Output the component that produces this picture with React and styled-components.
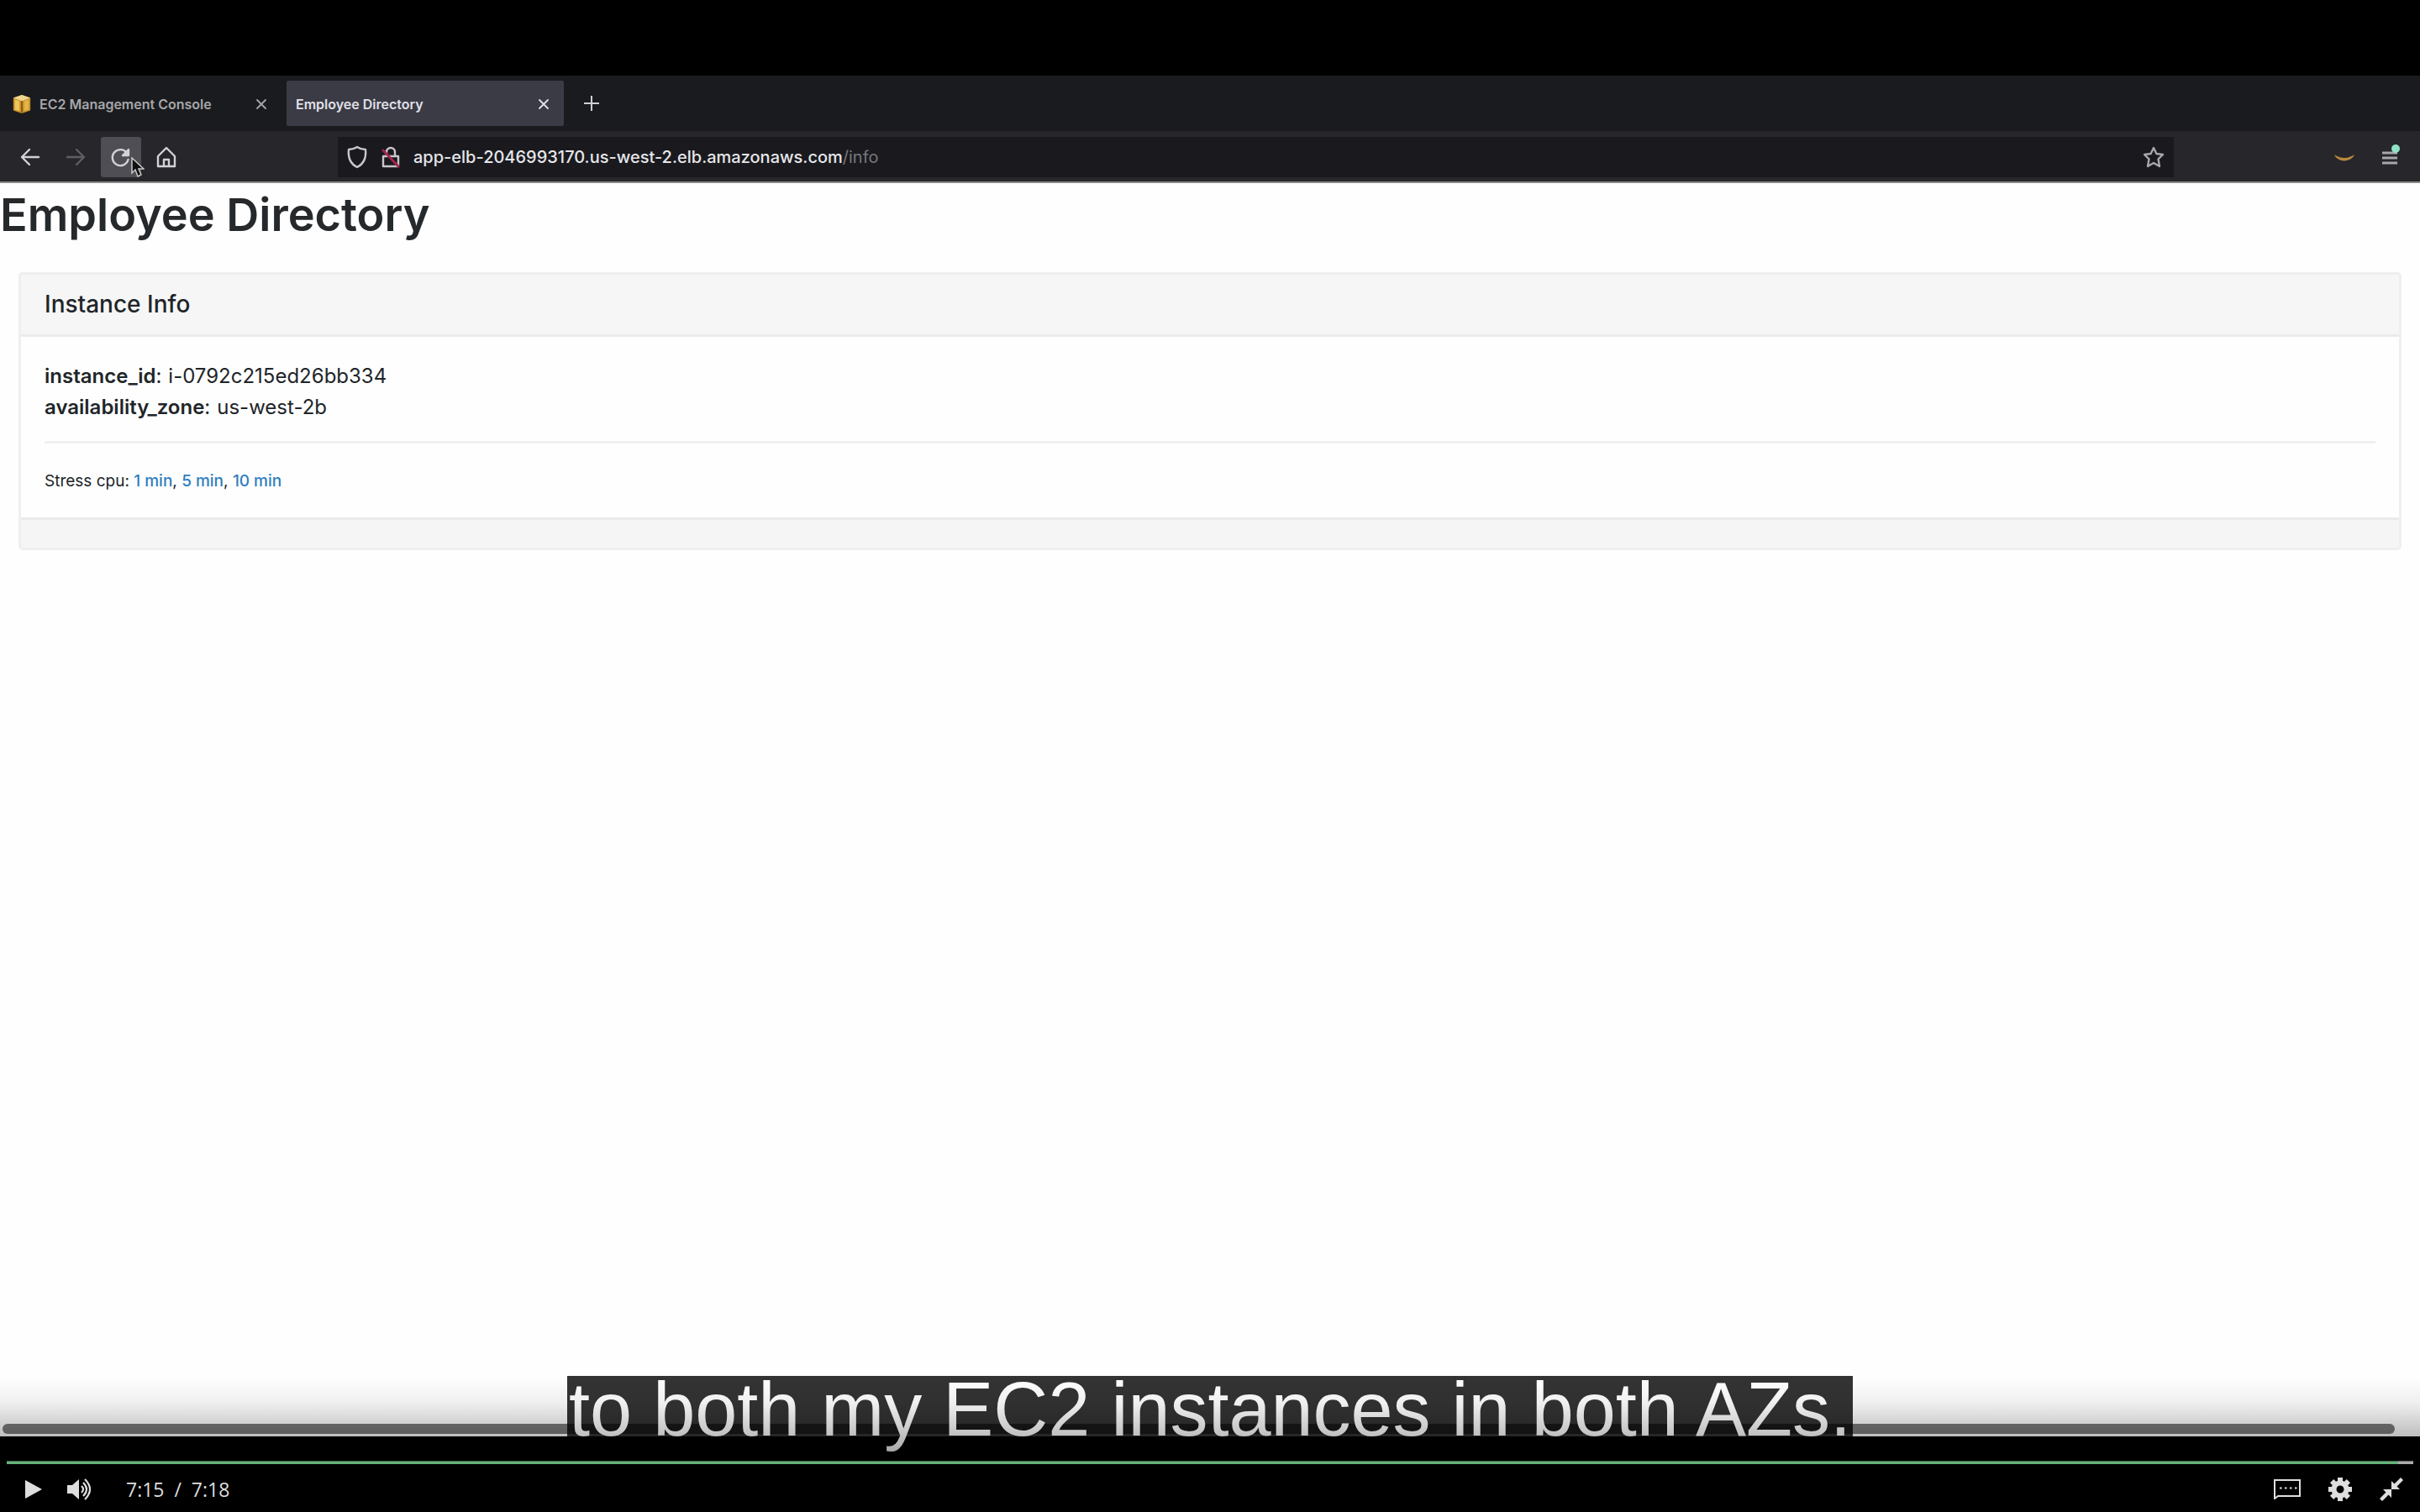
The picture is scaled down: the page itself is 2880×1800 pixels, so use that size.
import React from "react";
import styled, { createGlobalStyle } from "styled-components";

const ui = `Inter, "Liberation Sans", sans-serif`;

const Global = createGlobalStyle`
  *, *::before, *::after { box-sizing: border-box; }
  html, body, #root { height: 100%; }
  body { margin: 0; background: #000; font-family: ${ui}; overflow: hidden; }
  button { font: inherit; color: inherit; background: none; border: 0; padding: 0; margin: 0; display: flex; align-items: center; justify-content: center; }
  svg { display: block; flex-shrink: 0; }
`;

const Player = styled.div`
  display: flex;
  flex-direction: column;
  height: 100vh;
  background: #000;
`;

const Frame = styled.main`
  position: relative;
  flex: 1;
  min-height: 0;
  margin-top: 90px;
  display: flex;
  flex-direction: column;
  background: #fefefe;
`;

const TabStrip = styled.div`
  display: flex;
  align-items: center;
  height: 66px;
  background: #1a1b1e;
`;

const Tab = styled.div`
  display: flex;
  align-items: center;
  width: ${(p) => (p.$active ? 330 : 341)}px;
  height: 54px;
  padding: 2px ${(p) => (p.$active ? 14 : 20)}px 0 ${(p) => (p.$active ? 11 : 14)}px;
  border-radius: 2px;
  background: ${(p) => (p.$active ? "#3a3b45" : "transparent")};
  color: ${(p) => (p.$active ? "#e0e0e8" : "#a6a6aa")};
  font-size: 16px;
  font-weight: 600;
`;

const TabButton = styled.button`
  && {
    flex: 1;
    justify-content: flex-start;
    gap: 9px;
    white-space: nowrap;
  }
`;

const SmallButton = styled.button`
  width: 20px;
  height: 28px;
`;

const NewTab = styled.button`
  width: 66px;
  height: 54px;
`;

const Toolbar = styled.div`
  display: flex;
  align-items: center;
  height: 62px;
  padding: 2px 12px 0;
  background: #26262b;
  border-bottom: 2px solid #8a8a8a;
`;

const NavButtons = styled.div`
  display: flex;
  align-items: center;
  gap: 6px;
  width: 390px;
`;

const ToolButton = styled.button`
  && {
    width: 48px;
    height: 48px;
    border-radius: 3px;
    color: #d2d2d6;
    background: ${(p) => (p.$hover ? "#4e4e54" : "transparent")};
  }
`;

const AddressBar = styled.div`
  flex: 1;
  display: flex;
  align-items: center;
  height: 48px;
  padding: 0 14px 0 10px;
  gap: 14px;
  background: #1a1a1e;
`;

const Address = styled.div`
  flex: 1;
  font-size: 20px;
  font-weight: 500;
  color: #e6e6ea;
  span { font-weight: 400; color: #77777d; }
`;

const Extras = styled.div`
  width: 281px;
  display: flex;
  justify-content: flex-end;
  align-items: center;
  gap: 6px;
`;

const Page = styled.section`
  flex: 1;
  color: #212529;
`;

const Title = styled.h1`
  margin: 0;
  padding: 2px 0 32px;
  font-size: 54px;
  line-height: 72px;
  font-weight: 600;
  color: #26292b;
`;

const Card = styled.article`
  margin: 0 22px;
  border: 3px solid #efefef;
  border-radius: 5px;
`;

const CardHeader = styled.h2`
  margin: 0;
  padding: 19px 28px;
  border-bottom: 3px solid #ebebeb;
  background: #f6f6f6;
  font-size: 28px;
  line-height: 33px;
  font-weight: 500;
`;

const CardBody = styled.div`
  padding: 28px;
`;

const Details = styled.dl`
  margin: 0;
  font-size: 24px;
  line-height: 37px;
  div { display: flex; gap: 8px; }
  dt::after { content: ":"; font-weight: 400; }
  dt { font-weight: 600; }
  dd { margin: 0; }
`;

const Rule = styled.hr`
  margin: 22px 0 30px;
  border: 0;
  border-top: 3px solid #f0f0f0;
`;

const Stress = styled.p`
  margin: 0;
  font-size: 19px;
  line-height: 30px;
  a { color: #2f7dc0; font-weight: 500; text-decoration: none; }
`;

const CardFooter = styled.footer`
  height: 36px;
  border-top: 3px solid #ebebeb;
  background: #f5f5f5;
`;

const ScrollThumb = styled.div`
  height: 12px;
  margin: 0 30px 3px 3px;
  border-radius: 6px;
  background: #7a7a7a;
`;

const Caption = styled.div`
  position: absolute;
  left: 0;
  right: 0;
  top: calc(100% - 72px);
  display: flex;
  justify-content: center;
  pointer-events: none;
`;

const CaptionText = styled.span`
  padding: 0 2px;
  background: linear-gradient(rgba(0, 0, 0, 0.8) 72px, transparent 72px);
  color: #fff;
  font-family: "Liberation Sans", Arial, sans-serif;
  font-size: 90px;
  line-height: 80px;
  white-space: nowrap;
`;

const Shade = styled.div`
  position: absolute;
  left: 0;
  right: 0;
  bottom: -30px;
  height: 100px;
  background: linear-gradient(rgba(0, 0, 0, 0), rgba(0, 0, 0, 0.06) 30%, rgba(0, 0, 0, 0.25) 70%, rgba(0, 0, 0, 0.4));
  pointer-events: none;
`;

const Pointer = styled.svg`
  position: absolute;
  left: 156px;
  top: 97px;
`;

const Controls = styled.footer`
  height: 90px;
  padding: 29px 8px 0;
`;

const Seek = styled.input`
  display: block;
  appearance: none;
  width: 100%;
  height: 4px;
  margin: 0;
  background: linear-gradient(to right, #66b27b 99.37%, #aaa 99.37%);
  &::-webkit-slider-thumb { appearance: none; width: 0; height: 0; }
`;

const ControlRow = styled.div`
  display: flex;
  align-items: center;
  height: 57px;
  padding: 2px 0 0 8px;
  color: #dedede;
`;

const ControlButton = styled.button`
  && {
    width: ${(p) => p.$width}px;
    height: 48px;
  }
`;

const Time = styled.div`
  flex: 1;
  margin-left: 24px;
  font-family: "Open Sans", sans-serif;
  font-size: 23px;
  line-height: 30px;
  white-space: pre;
`;

const stroke = { fill: "none", stroke: "currentColor", strokeWidth: 2.4, strokeLinecap: "round", strokeLinejoin: "round" };

const Cross = () => (
  <svg width="14" height="14" viewBox="0 0 14 14" {...stroke} strokeWidth="1.8"><path d="M2 2l10 10M12 2L2 12" /></svg>
);

const AwsCube = () => (
  <svg width="24" height="24" viewBox="0 0 24 26">
    <path d="M12 1L23 5v16l-11 4L1 21V5z" fill="#c98f2c" />
    <path d="M12 1l11 4-11 4L1 5z" fill="#f0d68c" />
    <path d="M3 7l6 2v13l-6-2z" fill="#ecc658" />
    <path d="M21 7l-6 2v13l6-2z" fill="#e2b548" />
    <path d="M12 9v16" stroke="#8a5a14" strokeWidth="2" />
  </svg>
);

export default function App() {
  return (
    <>
      <Global />
      <Player>
        <Frame>
          <TabStrip>
            <Tab>
              <TabButton><AwsCube />EC2 Management Console</TabButton>
              <SmallButton aria-label="Close EC2 Management Console"><Cross /></SmallButton>
            </Tab>
            <Tab $active>
              <TabButton>Employee Directory</TabButton>
              <SmallButton aria-label="Close Employee Directory"><Cross /></SmallButton>
            </Tab>
            <NewTab aria-label="New tab">
              <svg width="20" height="20" viewBox="0 0 20 20" fill="none" stroke="#d0d0d4" strokeWidth="2"><path d="M10 1v18M1 10h18" /></svg>
            </NewTab>
          </TabStrip>

          <Toolbar>
            <NavButtons>
              <ToolButton aria-label="Back">
                <svg width="24" height="24" viewBox="0 0 24 24" {...stroke}><path d="M22 12H2M11 3l-9 9 9 9" /></svg>
              </ToolButton>
              <ToolButton aria-label="Forward">
                <svg width="24" height="24" viewBox="0 0 24 24" {...stroke} stroke="#5e5e63"><path d="M2 12h20M13 3l9 9-9 9" /></svg>
              </ToolButton>
              <ToolButton $hover aria-label="Reload">
                <svg width="26" height="26" viewBox="0 0 26 26" {...stroke}><path d="M20 8a9.500 9.500 0 1 0 1.500 8" /><path d="M22 4v7h-7z" fill="currentColor" /></svg>
              </ToolButton>
              <ToolButton aria-label="Home">
                <svg width="26" height="26" viewBox="0 0 26 26" {...stroke}><path d="M3 12L13 2l10 10v12H3zM10 24v-8h6v8" /></svg>
              </ToolButton>
            </NavButtons>
            <AddressBar>
              <svg width="26" height="28" viewBox="0 0 26 28" {...stroke} stroke="#c8c8cc"><path d="M13 2c3 2 6 3 10 3 1 10-2 17-10 21C5 22 2 15 3 5c4 0 7-1 10-3z" /></svg>
              <svg width="26" height="28" viewBox="0 0 26 28" {...stroke} stroke="#c8c8cc">
                <path d="M8 13V8a5 5 0 0 1 10 0v5M4 13h18v12H4z" /><path d="M4 6l18 19" stroke="#a8244c" strokeWidth="3" />
              </svg>
              <Address>app-elb-2046993170.us-west-2.elb.amazonaws.com<span>/info</span></Address>
              <SmallButton aria-label="Bookmark this page">
                <svg width="28" height="28" viewBox="0 0 28 28" {...stroke} stroke="#a8a8ac"><path d="M14 3l3.400 7 7.600 1-5.500 5.300L21 25l-7-4-7 4 1.500-8.700L3 11l7.600-1z" /></svg>
              </SmallButton>
            </AddressBar>
            <Extras>
              <ToolButton aria-label="Amazon extension">
                <svg width="26" height="16" viewBox="0 0 26 16" fill="#b9883c"><path d="M1 5q12 8 24 0q-1 3-4 5-8 5-16 0-3-2-4-5z" /></svg>
              </ToolButton>
              <ToolButton aria-label="Application menu">
                <svg width="26" height="34" viewBox="0 0 26 34"><path d="M4 12h18M4 18h18M4 24h18" stroke="#a8a8ac" strokeWidth="3" /><circle cx="20" cy="7" r="5" fill="#8fe3c4" /></svg>
              </ToolButton>
            </Extras>
          </Toolbar>

          <Page>
            <Title>Employee Directory</Title>
            <Card>
              <CardHeader>Instance Info</CardHeader>
              <CardBody>
                <Details>
                  <div><dt>instance_id</dt><dd>i-0792c215ed26bb334</dd></div>
                  <div><dt>availability_zone</dt><dd>us-west-2b</dd></div>
                </Details>
                <Rule />
                <Stress>Stress cpu: <a href="#1">1 min</a>, <a href="#5">5 min</a>, <a href="#10">10 min</a></Stress>
              </CardBody>
              <CardFooter />
            </Card>
          </Page>
          <ScrollThumb />

          <Pointer width="16" height="24" viewBox="0 0 16 24"><path d="M1 1v18l4-4 3 8 4-2-3-7h6z" fill="#111" stroke="#c8c8c8" strokeWidth="1.5" /></Pointer>
          <Caption><CaptionText>to both my EC2 instances in both AZs.</CaptionText></Caption>
          <Shade />
        </Frame>

        <Controls>
          <Seek type="range" aria-label="Seek" min="0" max="438" defaultValue="435" />
          <ControlRow>
            <ControlButton $width={48} aria-label="Play">
              <svg width="22" height="24" viewBox="0 0 22 24" fill="currentColor"><path d="M1 1l20 11L1 23z" /></svg>
            </ControlButton>
            <ControlButton $width={62} aria-label="Mute">
              <svg width="32" height="26" viewBox="0 0 32 26" fill="none" stroke="currentColor" strokeWidth="2.2"><path d="M1 8h6l8-7v24l-8-7H1z" fill="currentColor" stroke="none" /><path d="M18 9q4 4 0 8M20 5q8 8 0 16M22 1q12 12 0 24" /></svg>
            </ControlButton>
            <Time>{"7:15  /  7:18"}</Time>
            <ControlButton $width={56} aria-label="Captions">
              <svg width="32" height="24" viewBox="0 0 32 24" fill="none" stroke="currentColor" strokeWidth="2"><path d="M1 1h30v19H5l-4 3z" /><path d="M7 10.500h2.500M13 10.500h2.500M19 10.500h2.500M25 10.500h2.500" /></svg>
            </ControlButton>
            <ControlButton $width={70} aria-label="Settings">
              <svg width="28" height="28" viewBox="0 0 28 28" fill="none" stroke="currentColor">
                <circle cx="14" cy="14" r="7.5" strokeWidth="6" />
                <path d="M14 0v5M14 23v5M0 14h5M23 14h5M4.100 4.100l3.500 3.500M20.400 20.400l3.500 3.500M23.900 4.100l-3.500 3.500M7.600 20.400l-3.500 3.500" strokeWidth="6" />
              </svg>
            </ControlButton>
            <ControlButton $width={52} aria-label="Exit full screen">
              <svg width="28" height="28" viewBox="0 0 28 28" fill="currentColor"><path d="M14 4v10h10l-3.500-3.500L28 3l-3-3-7.500 7.500zM14 24V14H4l3.500 3.500L0 25l3 3 7.500-7.500z" /></svg>
            </ControlButton>
          </ControlRow>
        </Controls>
      </Player>
    </>
  );
}
